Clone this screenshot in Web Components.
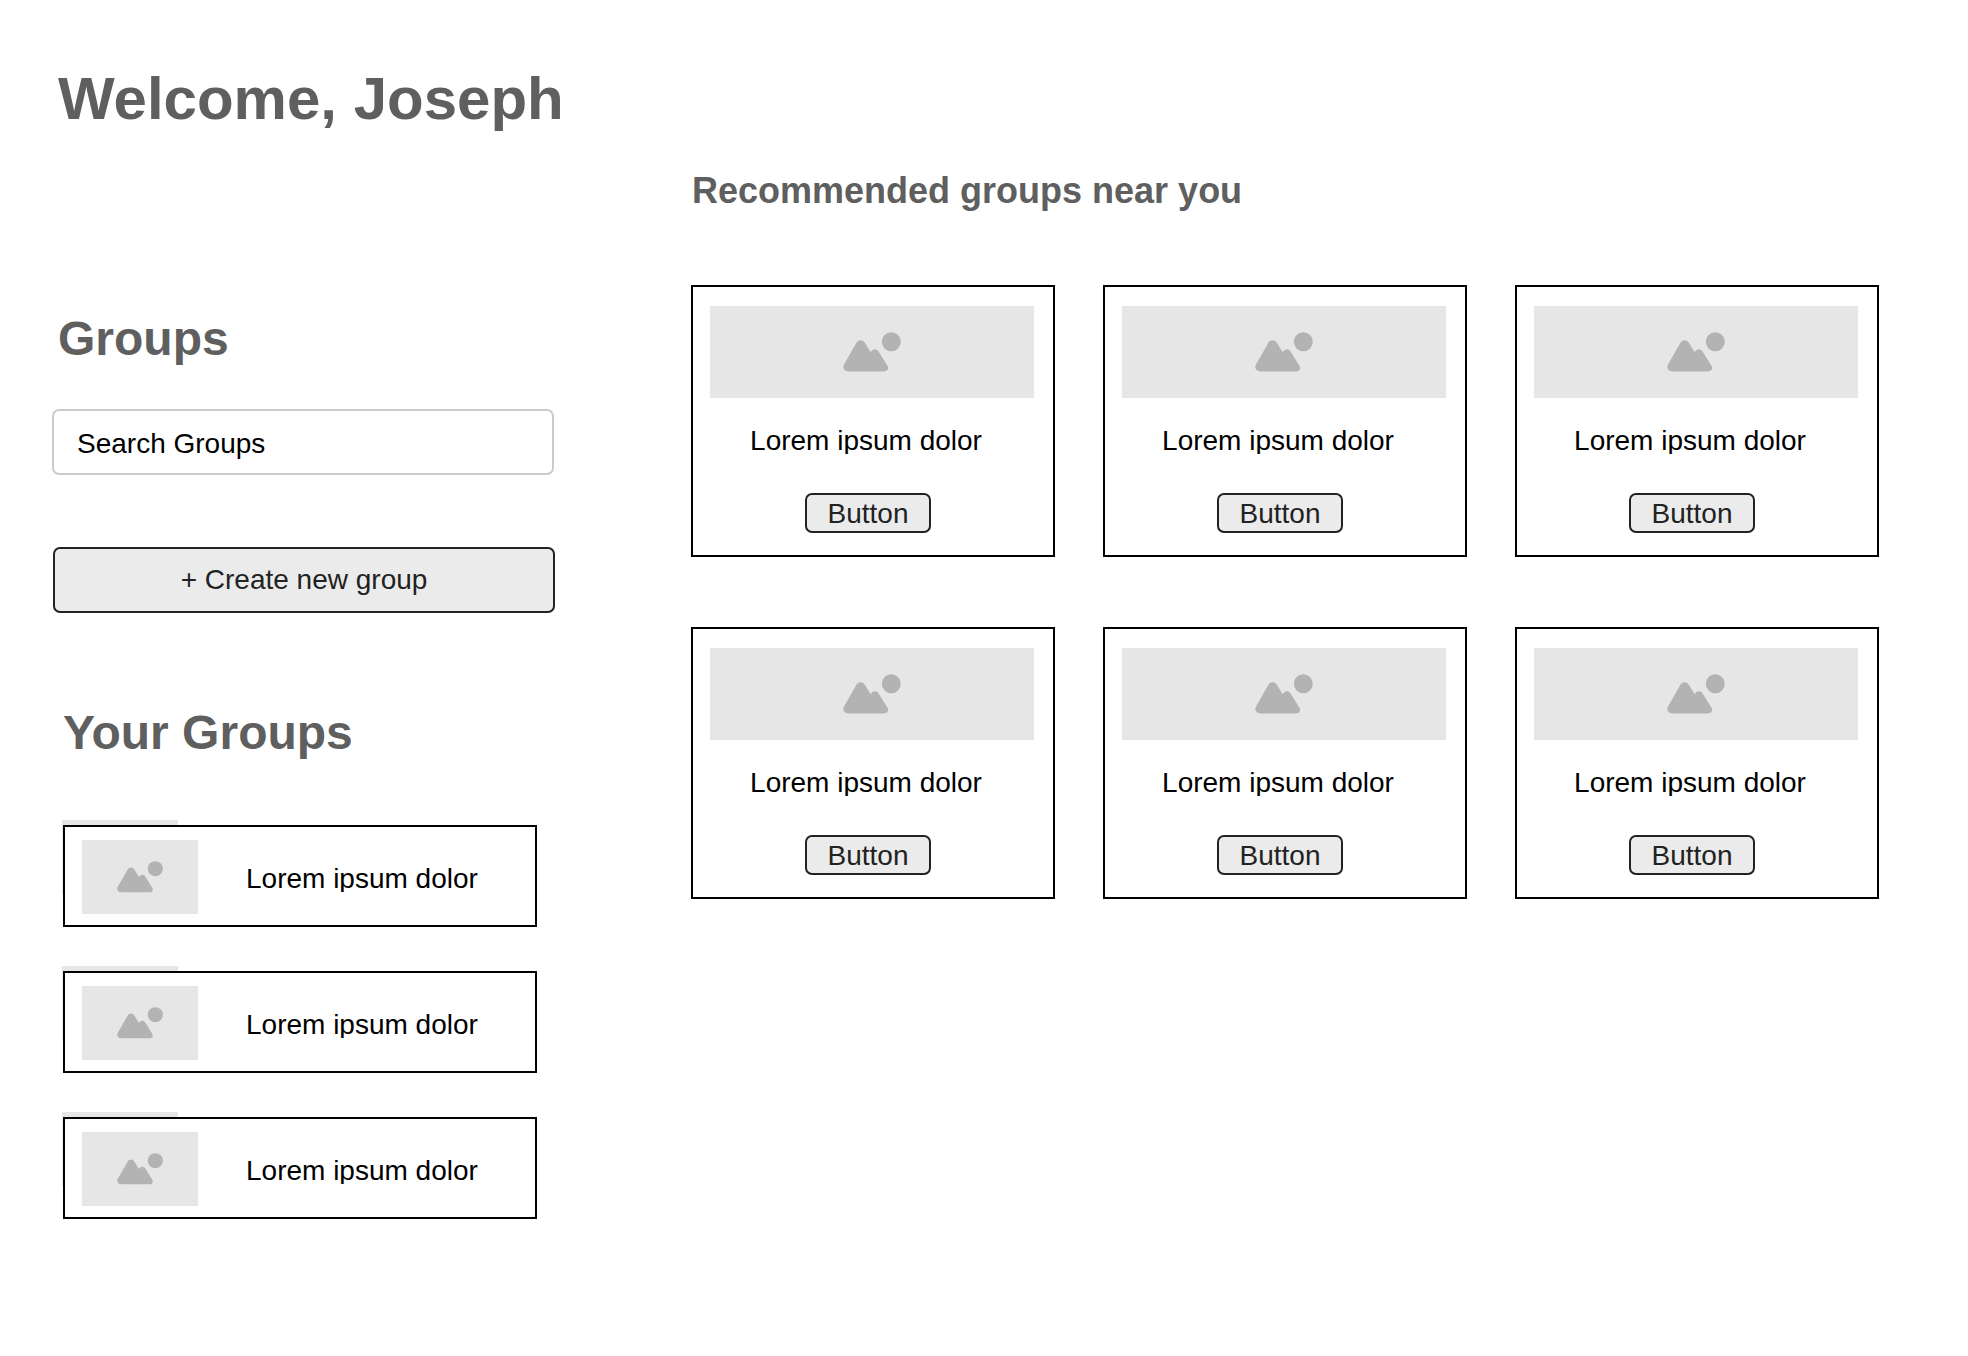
<!DOCTYPE html>
<html lang="en">
<head>
<meta charset="utf-8">
<meta name="viewport" content="width=device-width, initial-scale=1">
<title>Groups</title>
<style>
  body {
    margin: 0;
    background: #fff;
    color: #000;
    font-family: "Liberation Sans", Arial, Helvetica, sans-serif;
    font-size: 28px;
    line-height: 34px;
  }
</style>
</head>
<body>
<groups-page>
  <page-heading slot="title" level="1">Welcome, Joseph</page-heading>

  <group-sidebar slot="sidebar">
    <page-heading slot="search-title" level="2">Groups</page-heading>
    <search-field slot="search" label="Search Groups"></search-field>
    <action-button slot="create" wide>+ Create new group</action-button>
    <page-heading slot="list-title" level="2">Your Groups</page-heading>
    <group-row>Lorem ipsum dolor</group-row>
    <group-row>Lorem ipsum dolor</group-row>
    <group-row>Lorem ipsum dolor</group-row>
  </group-sidebar>

  <group-gallery slot="main">
    <page-heading slot="title" level="3">Recommended groups near you</page-heading>
    <group-card>Lorem ipsum dolor<action-button slot="action">Button</action-button></group-card>
    <group-card>Lorem ipsum dolor<action-button slot="action">Button</action-button></group-card>
    <group-card>Lorem ipsum dolor<action-button slot="action">Button</action-button></group-card>
    <group-card>Lorem ipsum dolor<action-button slot="action">Button</action-button></group-card>
    <group-card>Lorem ipsum dolor<action-button slot="action">Button</action-button></group-card>
    <group-card>Lorem ipsum dolor<action-button slot="action">Button</action-button></group-card>
  </group-gallery>
</groups-page>

<script>
  const define = (name, render) => {
    customElements.define(name, class extends HTMLElement {
      constructor() {
        super();
        this.attachShadow({ mode: "open" });
      }
      connectedCallback() {
        this.shadowRoot.innerHTML = render(this);
      }
    });
  };

  define("groups-page", () => `
    <style>
      :host { display: block; padding: 64px 89px 64px 52px; }
      header { padding-left: 6px; }
      .columns {
        display: grid;
        grid-template-columns: 503px minmax(0, 1fr);
        column-gap: 136px;
        align-items: start;
        margin-top: 36px;
      }
    </style>
    <header><slot name="title"></slot></header>
    <div class="columns">
      <slot name="sidebar"></slot>
      <slot name="main"></slot>
    </div>`);

  define("page-heading", el => {
    const level = el.getAttribute("level");
    return `
    <style>
      :host { display: block; color: #5f5f5f; }
      h1, h2, h3 { margin: 0; font-weight: bold; }
      h1 { font-size: 60px; line-height: 70px; }
      h2 { font-size: 48px; line-height: 56px; }
      h3 { font-size: 36px; line-height: 42px; }
    </style>
    <h${level}><slot></slot></h${level}>`;
  });

  define("group-sidebar", () => `
    <style>
      :host { display: block; padding-top: 141px; }
      .find { display: flex; flex-direction: column; }
      .find-title { padding-left: 6px; }
      .search { padding: 42px 1px 72px 0; }
      .create { padding-left: 1px; }
      .mine { padding: 92px 18px 0 11px; }
      .rows { display: flex; flex-direction: column; gap: 44px; padding-top: 64px; }
    </style>
    <section class="find">
      <div class="find-title"><slot name="search-title"></slot></div>
      <div class="search"><slot name="search"></slot></div>
      <div class="create"><slot name="create"></slot></div>
    </section>
    <section class="mine">
      <slot name="list-title"></slot>
      <div class="rows"><slot></slot></div>
    </section>`);

  define("search-field", el => `
    <style>
      :host { display: block; }
      input {
        display: block;
        box-sizing: border-box;
        width: 100%;
        height: 66px;
        margin: 0;
        padding: 4px 23px 0;
        border: 2px solid #ccc;
        border-radius: 7px;
        background: #fff;
        color: #000;
        font: inherit;
      }
      input::placeholder { color: #000; opacity: 1; }
    </style>
    <input type="search" aria-label="${el.getAttribute("label")}" placeholder="${el.getAttribute("label")}">`);

  define("action-button", () => `
    <style>
      :host { display: block; }
      button {
        display: block;
        box-sizing: border-box;
        width: 126px;
        height: 40px;
        margin: 0;
        padding: 2px 0 0;
        border: 2px solid #222;
        border-radius: 7px;
        background: #ebebeb;
        color: #222;
        font: inherit;
      }
      :host([wide]) button { width: 100%; height: 66px; padding: 0; }
    </style>
    <button type="button"><slot></slot></button>`);

  define("image-placeholder", () => `
    <style>
      :host {
        display: flex;
        align-items: center;
        justify-content: center;
        background: #e6e6e6;
      }
      svg { display: block; width: var(--icon-width, 58px); fill: #b3b3b3; }
    </style>
    <svg viewBox="0 0 58 40" aria-hidden="true">
      <path d="M5.5 39.4C1 39.4-.8 36 1 32.400L13.300 11C15.300 7.400 20 7.400 22 11L27.700 20.300C29.800 16.600 33.500 16.200 35.600 19.500L44.300 33.500C46.300 36.800 44.500 39.400 41 39.400Z"/>
      <circle cx="48.300" cy="9.700" r="9.500"/>
    </svg>`);

  define("group-row", () => `
    <style>
      :host { display: block; position: relative; }
      .backdrop {
        position: absolute;
        top: -5px;
        left: -1px;
        width: 116px;
        height: 74px;
        background: #e6e6e6;
      }
      article {
        position: relative;
        display: flex;
        align-items: center;
        gap: 48px;
        padding: 13px 17px 11px;
        border: 2px solid #000;
        background: #fff;
      }
      image-placeholder { flex: none; width: 116px; height: 74px; --icon-width: 46px; }
      .name { height: 30px; overflow: hidden; white-space: nowrap; }
    </style>
    <div class="backdrop"></div>
    <article>
      <image-placeholder></image-placeholder>
      <div class="name"><slot></slot></div>
    </article>`);

  define("group-gallery", () => `
    <style>
      :host { display: block; }
      .title { padding-left: 1px; }
      .cards {
        display: grid;
        grid-template-columns: repeat(3, minmax(0, 1fr));
        gap: 70px 48px;
        margin-top: 73px;
      }
    </style>
    <div class="title"><slot name="title"></slot></div>
    <div class="cards"><slot></slot></div>`);

  define("group-card", () => `
    <style>
      :host { display: block; }
      article {
        display: flex;
        flex-direction: column;
        padding: 19px 19px 22px 17px;
        border: 2px solid #000;
        background: #fff;
      }
      image-placeholder { height: 92px; }
      .name {
        height: 30px;
        margin-top: 26px;
        padding-right: 12px;
        overflow: hidden;
        text-align: center;
        white-space: nowrap;
      }
      .action { display: flex; justify-content: center; margin-top: 39px; padding-right: 8px; }
    </style>
    <article>
      <image-placeholder></image-placeholder>
      <div class="name"><slot></slot></div>
      <div class="action"><slot name="action"></slot></div>
    </article>`);
</script>
</body>
</html>
